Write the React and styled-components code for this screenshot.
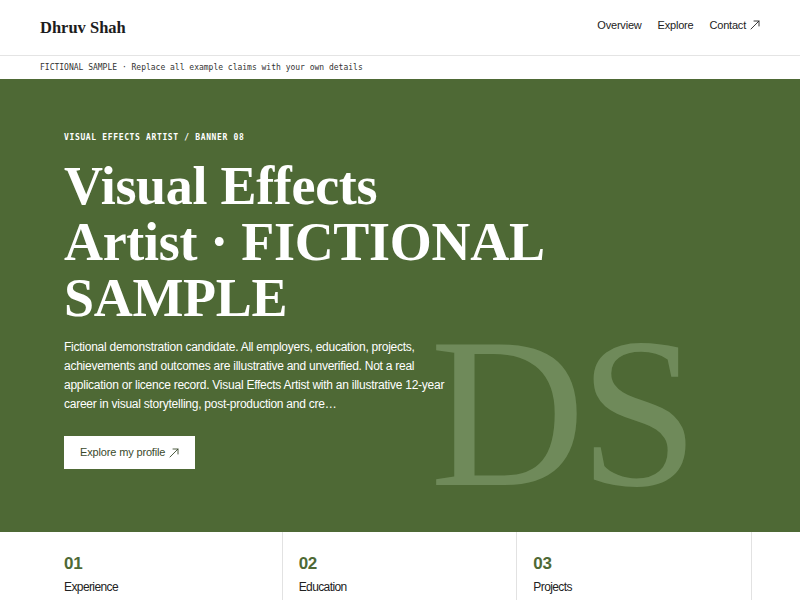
import * as React from "react";
import styled, { createGlobalStyle } from "styled-components";

const GlobalStyle = createGlobalStyle`
  html, body {
    margin: 0;
    padding: 0;
    background: #ffffff;
  }
  body {
    font-family: "Liberation Sans", Arial, sans-serif;
    color: #222;
    overflow: hidden;
  }
`;

const Page = styled.div`
  width: 800px;
  min-height: 600px;
`;

const Header = styled.header`
  display: flex;
  align-items: center;
  justify-content: space-between;
  height: 56px;
  padding: 0 40px;
  box-sizing: border-box;
  border-bottom: 1px solid #e4e4e4;
`;

const Logo = styled.div`
  font-family: "Liberation Serif", "DejaVu Serif", serif;
  font-weight: 700;
  font-size: 16.5px;
  color: #1d1d1d;
  padding-top: 1px;
`;

const Nav = styled.nav`
  display: flex;
  gap: 16px;
  font-size: 11px;
  letter-spacing: -0.2px;
  color: #222;
  padding-bottom: 5px;
`;

const NavLink = styled.a`
  display: flex;
  align-items: center;
  gap: 4px;
  color: inherit;
  text-decoration: none;
`;

const Notice = styled.div`
  height: 23px;
  display: flex;
  align-items: center;
  padding: 0 40px;
  font-family: "DejaVu Sans Mono", "Liberation Mono", monospace;
  font-size: 8px;
  color: #333;
`;

const Hero = styled.section`
  position: relative;
  overflow: hidden;
  height: 453px;
  box-sizing: border-box;
  padding: 54px 64px 0;
  background: #4e6935;
  color: #fff;
`;

const Eyebrow = styled.div`
  font-family: "DejaVu Sans Mono", "Liberation Mono", monospace;
  font-weight: 700;
  font-size: 8px;
  letter-spacing: 0.65px;
  text-transform: uppercase;
`;

const Title = styled.h1`
  position: relative;
  z-index: 1;
  margin: 16px 0 0;
  font-family: "Liberation Serif", "DejaVu Serif", serif;
  font-weight: 700;
  font-size: 54px;
  line-height: 56px;
  letter-spacing: -0.3px;
`;

const Lead = styled.p`
  position: relative;
  z-index: 1;
  margin: 12px 0 0;
  max-width: 390px;
  font-size: 12px;
  letter-spacing: -0.25px;
  line-height: 19px;
`;

const Button = styled.a`
  position: relative;
  z-index: 1;
  display: flex;
  align-items: center;
  gap: 4px;
  width: fit-content;
  margin-top: 22px;
  padding: 10px 16px;
  background: #fff;
  color: #3a4a2c;
  font-size: 11px;
  letter-spacing: -0.15px;
  line-height: 13px;
  text-decoration: none;
`;

const Monogram = styled.div`
  position: absolute;
  left: 430px;
  top: 226px;
  font-family: "Liberation Serif", "DejaVu Serif", serif;
  font-size: 215px;
  line-height: 1;
  letter-spacing: -6px;
  color: #6f8a5a;
  pointer-events: none;
`;

const Cards = styled.section`
  display: grid;
  grid-template-columns: repeat(3, 1fr);
  padding: 0 48px;
`;

const Card = styled.div`
  padding: 22px 16px 20px;
  border-right: 1px solid #e2e2e2;
`;

const CardNum = styled.div`
  font-weight: 700;
  font-size: 17px;
  letter-spacing: -0.3px;
  color: #4e6935;
`;

const CardLabel = styled.div`
  margin-top: 6px;
  font-size: 12px;
  letter-spacing: -0.6px;
  color: #222;
`;

const Arrow = ({ size = 9 }) => (
  <svg width={size} height={size} viewBox="0 0 10 10" fill="none"
    stroke="currentColor" strokeWidth="0.9" strokeLinecap="round">
    <path d="M1 9L9 1" />
    <path d="M4 1H9V6" />
  </svg>
);

const cards = [
  { num: "01", label: "Experience" },
  { num: "02", label: "Education" },
  { num: "03", label: "Projects" },
];

export default function App() {
  return (
    <Page>
      <GlobalStyle />
      <Header>
        <Logo>Dhruv Shah</Logo>
        <Nav>
          <NavLink href="#">Overview</NavLink>
          <NavLink href="#">Explore</NavLink>
          <NavLink href="#">Contact <Arrow size={10} /></NavLink>
        </Nav>
      </Header>
      <Notice>FICTIONAL SAMPLE · Replace all example claims with your own details</Notice>
      <Hero>
        <Monogram>DS</Monogram>
        <Eyebrow>Visual Effects Artist / Banner 08</Eyebrow>
        <Title>
          Visual Effects
          <br />
          Artist · FICTIONAL SAMPLE
        </Title>
        <Lead>
          Fictional demonstration candidate. All employers, education, projects,
          achievements and outcomes are illustrative and unverified. Not a real
          application or licence record. Visual Effects Artist with an
          illustrative 12-year career in visual storytelling, post-production
          and cre…
        </Lead>
        <Button href="#">Explore my profile <Arrow size={10} /></Button>
      </Hero>
      <Cards>
        {cards.map(c => (
          <Card key={c.num}>
            <CardNum>{c.num}</CardNum>
            <CardLabel>{c.label}</CardLabel>
          </Card>
        ))}
      </Cards>
    </Page>
  );
}
